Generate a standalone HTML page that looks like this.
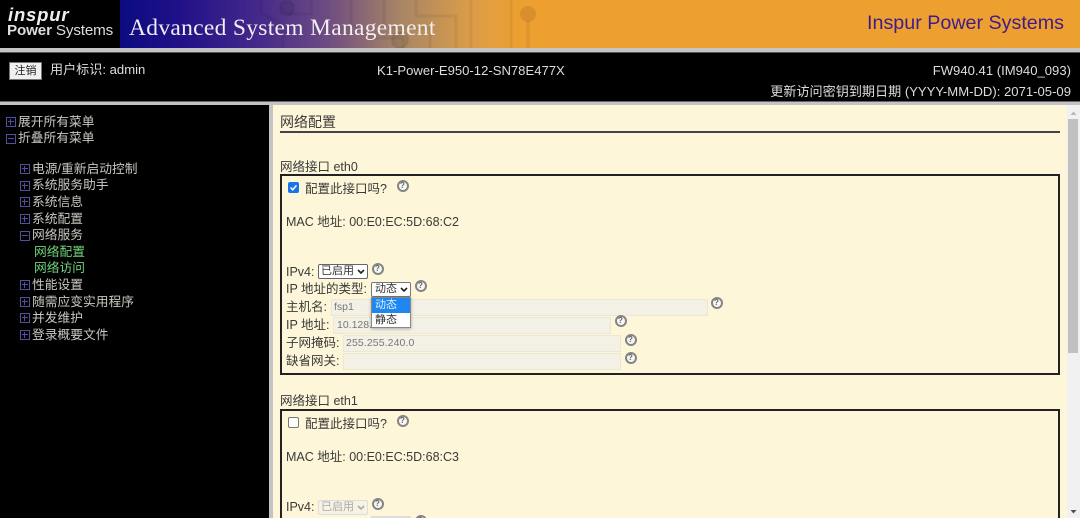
<!DOCTYPE html>
<html><head><meta charset="utf-8">
<style>
html,body{margin:0;padding:0;width:1080px;height:518px;overflow:hidden;background:#000}
*{box-sizing:border-box}
body{font-family:"Liberation Sans","Noto Sans CJK SC",sans-serif;position:relative;filter:blur(.3px)}
.a{position:absolute;white-space:nowrap}
.w{color:#ddd;font-size:13.1px;line-height:16px}
.n{color:#c8c8c0;font-size:12.75px;line-height:16px}
.g{color:#6fd47a;font-size:12.75px;line-height:16px}
.t{color:#3a3a3a;font-size:12.5px;line-height:16px}
.ic{position:absolute;width:10px;height:10px;border:1.5px solid #50509c}
.ic:before{content:"";position:absolute;left:1px;right:1px;top:2.75px;height:1.5px;background:#50509c}
.ic.p:after{content:"";position:absolute;top:1px;bottom:1px;left:2.75px;width:1.5px;background:#50509c}
.q{position:absolute;width:12px;height:12px;margin:-.5px;border-radius:50%;border:2px solid #858585;background:#f6f6f2;color:#666;font-size:8px;line-height:8px;text-align:center;font-weight:bold}
.box{position:absolute;border:2px solid #222;left:280px;width:780px}
.in{position:absolute;background:#f3f1e6;border:1px solid #ebe7d2;height:17px;color:#777;font-size:10.5px;line-height:15px;padding-left:2px}
.sel{position:absolute;height:15px;background:#fff;border:1px solid #666;border-radius:2px;color:#333;font-size:11px;line-height:13px;padding-left:2px}
.sel svg{position:absolute;right:2px;top:4px}
</style></head><body>
<!-- header -->
<div class="a" style="left:0;top:0;width:1080px;height:48px;background:#ed9f30"></div>
<div class="a" style="left:0;top:0;width:120px;height:48px;background:#000"></div>
<div class="a" style="left:120px;top:0;width:400px;height:48px;background:linear-gradient(90deg,#0b0b80 0%,#1f1088 14%,#43288a 34%,#6e4c82 52%,#a78565 70%,#dc9d48 88%,#ed9f30 100%)"></div>
<svg class="a" style="left:116px;top:0" width="440" height="48" fill="none" stroke="#000" stroke-opacity=".06" stroke-width="3"><path d="M145 0v12l22 14v22M195 0v14h-24M235 0v24l22 14h30v10M268 0v28h46v20M300 0v16h40v32M355 0v48M395 0v48"/><circle cx="171" cy="8" r="7" fill="#000" fill-opacity=".08"/><circle cx="284" cy="40" r="8" fill="#000" fill-opacity=".08"/><circle cx="412" cy="14" r="8" fill="#c9822e" fill-opacity=".55" stroke="none"/><path d="M412 20v28" stroke="#c9822a" stroke-opacity=".4"/></svg>
<div class="a" style="left:8px;top:5px;color:#eee;font-size:18.5px;font-weight:bold;font-style:italic;line-height:20px;letter-spacing:.8px">inspur</div>
<div class="a" style="left:7px;top:22px;color:#ddd;font-size:15.200px;line-height:18px;letter-spacing:-.15px"><b>Power</b> Systems</div>
<div class="a" style="left:129px;top:14px;color:#f2eef0;font-family:'Liberation Serif',serif;font-size:23.5px;line-height:28px;letter-spacing:.3px">Advanced System Management</div>
<div class="a" style="right:16px;top:11px;color:#3f1c8c;font-size:19.7px;line-height:24px">Inspur Power Systems</div>
<!-- gray bars -->
<div class="a" style="left:0;top:48px;width:1080px;height:5px;background:#c4c4c4;border-bottom:1px solid #555"></div>
<div class="a" style="left:0;top:101px;width:1080px;height:4px;background:#c4c4c4;border-top:1px solid #666"></div>
<!-- info -->
<div class="a" style="left:9px;top:62px;width:33px;height:18px;background:#f0f0f0;border:1px solid #777;color:#222;font-size:11px;line-height:16px;text-align:center">注销</div>
<div class="a w" style="left:50px;top:62px">用户标识: admin</div>
<div class="a w" style="left:377px;top:63px">K1-Power-E950-12-SN78E477X</div>
<div class="a w" style="right:9px;top:63px">FW940.41 (IM940_093)</div>
<div class="a w" style="right:9px;top:84px">更新访问密钥到期日期 (YYYY-MM-DD): 2071-05-09</div>
<!-- divider -->
<div class="a" style="left:269px;top:105px;width:4px;height:413px;background:#c4c4c4"></div>
<!-- nav -->
<i class="ic p" style="left:6px;top:117px"></i><div class="a n" style="left:18px;top:114px">展开所有菜单</div>
<i class="ic" style="left:6px;top:134px"></i><div class="a n" style="left:18px;top:130px">折叠所有菜单</div>
<i class="ic p" style="left:20px;top:164px"></i><div class="a n" style="left:32px;top:161px">电源/重新启动控制</div>
<i class="ic p" style="left:20px;top:181px"></i><div class="a n" style="left:32px;top:177px">系统服务助手</div>
<i class="ic p" style="left:20px;top:197px"></i><div class="a n" style="left:32px;top:194px">系统信息</div>
<i class="ic p" style="left:20px;top:214px"></i><div class="a n" style="left:32px;top:211px">系统配置</div>
<i class="ic" style="left:20px;top:231px"></i><div class="a n" style="left:32px;top:227px">网络服务</div>
<div class="a g" style="left:34px;top:244px">网络配置</div>
<div class="a g" style="left:34px;top:260px">网络访问</div>
<i class="ic p" style="left:20px;top:280px"></i><div class="a n" style="left:32px;top:277px">性能设置</div>
<i class="ic p" style="left:20px;top:297px"></i><div class="a n" style="left:32px;top:294px">随需应变实用程序</div>
<i class="ic p" style="left:20px;top:313px"></i><div class="a n" style="left:32px;top:310px">并发维护</div>
<i class="ic p" style="left:20px;top:330px"></i><div class="a n" style="left:32px;top:327px">登录概要文件</div>
<!-- content -->
<div class="a" style="left:273px;top:105px;width:795px;height:413px;background:#fdf6d8"></div>
<div class="a" style="left:280px;top:114px;color:#3a3a3a;font-size:14px;line-height:17px">网络配置</div>
<div class="a" style="left:280px;top:131px;width:780px;height:2px;background:#444"></div>
<div class="a t" style="left:280px;top:159px">网络接口 eth0</div>
<div class="box" style="top:174px;height:201px"></div>
<div class="a" style="left:288px;top:182px;width:11px;height:11px;background:#1a73e8;border-radius:2px"><svg width="11" height="11" style="display:block"><path d="M2.5 5.5l2.2 2.3 3.8-4.4" fill="none" stroke="#fff" stroke-width="1.5"/></svg></div>
<div class="a t" style="left:305px;top:181px">配置此接口吗?</div>
<div class="q" style="left:397px;top:180px">?</div>
<div class="a t" style="left:286px;top:214px">MAC 地址: 00:E0:EC:5D:68:C2</div>
<div class="a t" style="left:286px;top:264px">IPv4:</div>
<div class="sel" style="left:318px;top:264px;width:50px">已启用<svg width="8" height="6"><path d="M1 1l3 3 3-3" fill="none" stroke="#222" stroke-width="1.6"/></svg></div>
<div class="q" style="left:372px;top:263px">?</div>
<div class="a t" style="left:286px;top:281px">IP 地址的类型:</div>
<div class="sel" style="left:371px;top:282px;width:40px;border-color:#777;padding-left:3px">动态<svg width="8" height="6"><path d="M1 1l3 3 3-3" fill="none" stroke="#222" stroke-width="1.6"/></svg></div>
<div class="q" style="left:415px;top:280px">?</div>
<div class="a t" style="left:286px;top:299px">主机名:</div>
<div class="in" style="left:331px;top:299px;width:377px">fsp1</div>
<div class="q" style="left:711px;top:297px">?</div>
<div class="a t" style="left:286px;top:317px">IP 地址:</div>
<div class="in" style="left:333px;top:317px;width:278px;padding-left:3px">10.128.</div>
<div class="q" style="left:615px;top:315px">?</div>
<div class="a t" style="left:286px;top:335px">子网掩码:</div>
<div class="in" style="left:343px;top:335px;width:278px;padding-left:2px;letter-spacing:.1px">255.255.240.0</div>
<div class="q" style="left:625px;top:334px">?</div>
<div class="a t" style="left:286px;top:353px">缺省网关:</div>
<div class="in" style="left:343px;top:353px;width:278px"></div>
<div class="q" style="left:625px;top:352px">?</div>
<!-- dropdown -->
<div class="a" style="left:371px;top:297px;width:40px;height:31px;background:#fff;border:1px solid #888;box-shadow:0 1px 3px rgba(0,0,0,.3);font-size:11px;line-height:15px;color:#333">
<div style="background:#1e88f0;color:#dfeeff;height:15px;padding-left:3px">动态</div>
<div style="padding-left:3px">静态</div></div>
<!-- eth1 -->
<div class="a t" style="left:280px;top:393px">网络接口 eth1</div>
<div class="box" style="top:409px;height:120px"></div>
<div class="a" style="left:288px;top:417px;width:11px;height:11px;background:#fff;border:1px solid #777;border-radius:2px"></div>
<div class="a t" style="left:305px;top:416px">配置此接口吗?</div>
<div class="q" style="left:397px;top:415px">?</div>
<div class="a t" style="left:286px;top:449px">MAC 地址: 00:E0:EC:5D:68:C3</div>
<div class="a t" style="left:286px;top:499px">IPv4:</div>
<div class="sel" style="left:318px;top:500px;width:50px;background:#f6f3e4;border-color:#ddd;color:#aaa">已启用<svg width="8" height="6"><path d="M1 1l3 3 3-3" fill="none" stroke="#aaa" stroke-width="1.6"/></svg></div>
<div class="q" style="left:372px;top:498px">?</div>
<div class="a" style="left:371px;top:516px;width:40px;height:2px;background:#f3f0e0;border:1px solid #ddd"></div>
<div class="q" style="left:415px;top:515px">?</div>
<!-- scrollbar -->
<div class="a" style="left:1067px;top:105px;width:13px;height:413px;background:#f1f1f1"></div>
<div class="a" style="left:1068px;top:119px;width:10px;height:234px;background:#c1c1c1"></div>
<svg class="a" style="left:1067px;top:105px" width="13" height="413"><path d="M3.500 10l3-3.500 3 3.500z" fill="#b8b8b8"/><path d="M3.500 405l3 3.500 3-3.500z" fill="#505050"/></svg>
</body></html>
